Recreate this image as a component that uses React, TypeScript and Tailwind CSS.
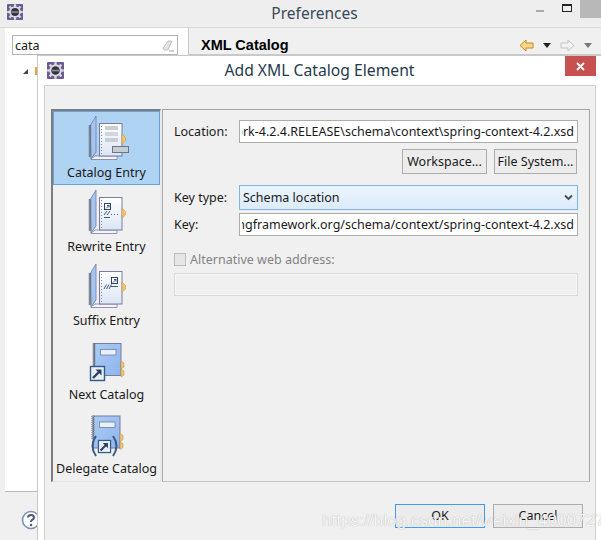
const font = "[font-family:'Noto_Sans',sans-serif]";

function Gear({ className }: { className: string }) {
  const teeth = [0, 45, 90, 135, 180, 225, 270, 315];
  return (
    <svg viewBox="0 0 16 16" className={className}>
      <rect x="0" y="0" width="16" height="16" fill="#6a5a9a" rx="1" />
      {teeth.map((t) => (
        <rect key={t} x="6.9" y="0.2" width="2.2" height="3.6" fill="#dcdcd6" transform={`rotate(${t} 8 8)`} />
      ))}
      <circle cx="8" cy="8" r="5.8" fill="#dcdcd6" />
      <circle cx="8" cy="8" r="4" fill="#34343f" />
      <rect x="4.4" y="7.3" width="7.2" height="1.5" fill="#8f8bb0" />
    </svg>
  );
}

function Spiral({ x, y, count }: { x: number; y: number; count: number }) {
  return (
    <g>
      {Array.from({ length: count }).map((_, i) => (
        <ellipse key={i} cx={x} cy={y + i * 2} rx="1.4" ry="0.6" fill="#dfe5ee" stroke="#4a5268" strokeWidth="0.6" />
      ))}
    </g>
  );
}

function EntryBase({ children }: { children?: React.ReactNode }) {
  return (
    <>
      <path d="M4 12 L10 2 V38 L5 45z" fill="#a4c6ee" stroke="#6f7da6" strokeWidth="0.8" />
      <path d="M5 45 L9 42 H31 V45.5 H5z" fill="#f2f5fb" stroke="#7d7a9f" strokeWidth="0.8" />
      <Spiral x={4} y={12} count={16} />
      <rect x="13.5" y="9.5" width="22.5" height="32.5" fill="url(#page)" stroke="#7d7a9f" />
      <path d="M15.5 12v28" stroke="#5f78b0" strokeWidth="0.8" strokeDasharray="1 2" />
      <path d="M36 20 L39.5 23.5 V27 L36 30z" fill="#f4c46c" stroke="#c59a4a" strokeWidth="0.6" />
      {children}
    </>
  );
}

function Defs() {
  return (
    <defs>
      <linearGradient id="page" x1="0" y1="0" x2="0" y2="1">
        <stop offset="0" stopColor="#ffffff" />
        <stop offset="1" stopColor="#dbe5f4" />
      </linearGradient>
      <linearGradient id="cover" x1="0" y1="0" x2="1" y2="1">
        <stop offset="0" stopColor="#a9cdf2" />
        <stop offset="1" stopColor="#8fb4ef" />
      </linearGradient>
    </defs>
  );
}

function CatalogEntryIcon() {
  return (
    <svg width="46" height="48" viewBox="0 0 46 48" className="block">
      <Defs />
      <EntryBase>
        <rect x="19" y="12" width="13" height="4" fill="#c9cdd4" />
        <rect x="19" y="18" width="13" height="4" fill="#d2d6dc" />
        <rect x="19" y="24" width="13" height="4" fill="#c9cdd4" />
        <rect x="26.5" y="32.5" width="16" height="6" fill="#c4ccd6" stroke="#6f7480" />
      </EntryBase>
    </svg>
  );
}

function RewriteEntryIcon() {
  return (
    <svg width="46" height="48" viewBox="0 0 46 48" className="block">
      <Defs />
      <EntryBase>
        <rect x="18.5" y="15.5" width="6" height="6" fill="#fff" stroke="#2d4470" />
        <path d="M20 20.5 L23 17.5 M21 17.5 H23 V19.5" stroke="#2d4470" fill="none" strokeWidth="0.9" />
        <path d="M18 27 L21 23 M21 27 L24 23 M25 26.5 h1 M28 26.5 h1 M31 26.5 h1" stroke="#2d4470" strokeWidth="0.9" fill="none" />
        <path d="M18 29.5 H24" stroke="#2d4470" strokeWidth="0.9" />
      </EntryBase>
    </svg>
  );
}

function SuffixEntryIcon() {
  return (
    <svg width="46" height="48" viewBox="0 0 46 48" className="block">
      <Defs />
      <EntryBase>
        <rect x="25.5" y="15.5" width="6" height="6" fill="#fff" stroke="#2d4470" />
        <path d="M27 20.5 L30 17.5 M28 17.5 H30 V19.5" stroke="#2d4470" fill="none" strokeWidth="0.9" />
        <path d="M18 27 L20.5 22.5 M20.5 27 L23 22.5 M23 27 L25.5 22.5" stroke="#2d4470" strokeWidth="0.9" fill="none" />
        <path d="M25 24.5 H32" stroke="#2d4470" strokeWidth="0.9" />
      </EntryBase>
    </svg>
  );
}

function Book() {
  return (
    <>
      <rect x="8.5" y="7.5" width="26.5" height="32" fill="url(#cover)" stroke="#7d7a9f" />
      <Spiral x={8} y={8} count={12} />
      <rect x="14.5" y="13.5" width="15.5" height="5.5" fill="#e8f0fa" stroke="#7d7a9f" strokeWidth="0.8" />
      <path d="M35 25 L38 27 V31 L35 33z M35 33 L38 35 V39 L35 41z" fill="#f4c46c" stroke="#c59a4a" strokeWidth="0.6" />
    </>
  );
}

function ShortcutBox({ x, y, s }: { x: number; y: number; s: number }) {
  return (
    <g transform={`translate(${x} ${y}) scale(${s / 15})`}>
      <rect x="0.5" y="0.5" width="14" height="14" fill="#e8eef6" stroke="#345a88" strokeWidth="1.4" />
      <path d="M3 12 L10 5" stroke="#2e3f63" strokeWidth="2.4" />
      <path d="M5.5 3.5 H11.5 V9.5z" fill="#2e3f63" />
    </g>
  );
}

function NextCatalogIcon() {
  return (
    <svg width="46" height="48" viewBox="0 0 46 48" className="block">
      <Defs />
      <Book />
      <ShortcutBox x={4} y={30} s={15} />
    </svg>
  );
}

function DelegateCatalogIcon() {
  return (
    <svg width="46" height="48" viewBox="0 0 46 48" className="block">
      <Defs />
      <g transform="translate(-1 -1.5)">
        <Book />
      </g>
      <ShortcutBox x={12} y={30} s={13} />
      <path d="M10 26 Q3 36 10 46" fill="none" stroke="#3a5a86" strokeWidth="2" />
      <path d="M27 26 Q34 36 27 46" fill="none" stroke="#3a5a86" strokeWidth="2" />
    </svg>
  );
}

const entries = [
  { label: "Catalog Entry", icon: <CatalogEntryIcon />, active: true },
  { label: "Rewrite Entry", icon: <RewriteEntryIcon /> },
  { label: "Suffix Entry", icon: <SuffixEntryIcon /> },
  { label: "Next Catalog", icon: <NextCatalogIcon /> },
  { label: "Delegate Catalog", icon: <DelegateCatalogIcon /> },
];

function PageList() {
  return (
    <div className="w-[110px] shrink-0 border-t-2 border-l-2 border-r border-b border-t-[#7c7c7c] border-l-[#7c7c7c] border-r-[#e3e3e3] border-b-[#e3e3e3] bg-[#f0f0f0]">
      {entries.map((e) => (
        <div
          key={e.label}
          className={
            "flex h-[74px] flex-col items-center pt-[2px] text-[12.5px] leading-[16px] text-[#1a1a1a] " +
            (e.active ? "border border-[#6aa2dc] bg-[#afd3f3]" : "border border-transparent")
          }
        >
          <div className="ml-[4px] h-[47px] w-[46px] shrink-0">{e.icon}</div>
          <span className="mt-[4px] whitespace-nowrap">{e.label}</span>
        </div>
      ))}
    </div>
  );
}

function ClippedField({ text }: { text: string }) {
  return (
    <div className="h-[23px] w-[339px] border border-[#acacac] bg-white px-[2px] text-[12.5px] text-[#1a1a1a]">
      <div className="flex h-full items-center justify-end overflow-hidden whitespace-nowrap pr-px pt-[2px]">
        <span>{text}</span>
      </div>
    </div>
  );
}

function FormPanel() {
  return (
    <div className="flex-1 border border-[#a6a6a6] border-b-[#c4c4c4] bg-[#f0f0f0] pl-[11px] pr-[11px] pt-[10px] text-[12.5px] text-[#1a1a1a]">
      <div className="flex items-center justify-between">
        <span className="pt-[2px]">Location:</span>
        <ClippedField text="spring-framework-4.2.4.RELEASE\schema\context\spring-context-4.2.xsd" />
      </div>
      <div className="mt-[6px] flex justify-end gap-[7px] pr-px">
        <div className="flex h-[25px] w-[85px] items-center justify-center border border-[#adadad] bg-[#ececec] pt-[2px]">Workspace...</div>
        <div className="flex h-[25px] w-[83px] items-center justify-center border border-[#adadad] bg-[#ececec] pt-[2px]">File System...</div>
      </div>
      <div className="mt-[11px] flex items-center justify-between">
        <span className="pt-[2px]">Key type:</span>
        <div className="flex h-[25px] w-[339px] items-center justify-between border border-[#7eb4ea] bg-gradient-to-b from-[#ecf4fc] to-[#dcecfc] pl-[3px] pr-[4px]">
          <span className="pt-[2px]">Schema location</span>
          <svg width="9" height="7" viewBox="0 0 9 7">
            <path d="M1 1.5 L4.5 5 L8 1.5" fill="none" stroke="#4a4a4a" strokeWidth="1.8" />
          </svg>
        </div>
      </div>
      <div className="mt-[3px] flex items-center justify-between">
        <span className="pt-[2px]">Key:</span>
        <ClippedField text="http://www.springframework.org/schema/context/spring-context-4.2.xsd" />
      </div>
      <div className="mt-[14px] flex h-[19px] items-center gap-[4px] text-[#838383]">
        <div className="h-[13px] w-[12px] border border-[#bcbcbc] bg-[#e6e6e6]" />
        <span className="pt-[2px]">Alternative web address:</span>
      </div>
      <div className="mt-[4px] h-[23px] w-[404px] border border-[#d9d9d9] bg-[#f0f0f0] shadow-[inset_0_0_0_1px_#f7f7f7]" />
    </div>
  );
}

function Dialog() {
  return (
    <div className="absolute bottom-0 left-[37px] right-0 top-[55px] flex flex-col border-l border-t border-[#c9c9c9] bg-white">
      <div className="relative flex h-[29px] shrink-0 items-center justify-center bg-white">
        <Gear className="absolute left-[9px] top-[6px] h-[17px] w-[17px]" />
        <span className="text-[15.7px] text-[#263a4e]">Add XML Catalog Element</span>
        <div className="absolute right-[5px] top-0 flex h-[20px] w-[31px] items-center justify-center bg-[#c75050]">
          <svg width="9" height="9" viewBox="0 0 9 9">
            <path d="M1 1 L8 8 M8 1 L1 8" stroke="#fff" strokeWidth="1.8" />
          </svg>
        </div>
      </div>
      <div className="ml-[6px] mr-[5px] flex flex-1 flex-col border-l border-r border-t border-[#d0d0d0] bg-[#f0f0f0]">
        <div className="ml-[6px] mr-[5px] mt-[23px] flex h-[373px] gap-[1px]">
          <PageList />
          <FormPanel />
        </div>
        <div className="mt-[22px] flex justify-end gap-[8px] pr-[12px] text-[12.5px] text-[#1a1a1a]">
          <div className="flex h-[24px] w-[90px] items-center justify-center border border-[#3e9bf0] bg-[#ececec]">OK</div>
          <div className="flex h-[24px] w-[90px] items-center justify-center border border-[#adadad] bg-[#ececec]">Cancel</div>
        </div>
      </div>
    </div>
  );
}

export default function App() {
  return (
    <div className={`relative h-[540px] w-[601px] overflow-hidden bg-[#f0f0f0] ${font}`}>
      <div className="relative flex h-[28px] items-center justify-center border-b border-[#d8d8d8] bg-[#eeeeee] pl-[28px]">
        <Gear className="absolute left-[7px] top-[4px] h-[16px] w-[16px]" />
        <span className="text-[15.5px] text-[#3a4a5a]">Preferences</span>
        <div className="absolute left-[536px] top-[10px] h-[2px] w-[8px] bg-[#a8a8a8]" />
        <div className="absolute left-[562px] top-[4px] h-[8px] w-[10px] border border-t-2 border-[#222]" />
        <div className="absolute left-[580px] top-0 h-[18px] w-[21px] bg-[#b8b8b8]" />
      </div>
      <div className="flex h-[512px]">
        <div className="ml-[5px] flex w-[184px] flex-col border-r border-[#c8c8c8]">
          <div className="h-[463px] bg-white pl-[7px] pt-[7px]">
            <div className="flex h-[20px] w-[166px] items-center justify-between border border-[#b4b4b4] bg-white pl-[2px] pr-[2px] pt-[2px] text-[12.5px] text-[#1a1a1a]">
              <span>cata</span>
              <svg width="14" height="14" viewBox="0 0 14 14">
                <path d="M2 9 L7 2 H11 L7 11 H3z" fill="#e4e4e4" stroke="#c0c0c0" />
                <path d="M8 12 H13" stroke="#a0a0a0" />
              </svg>
            </div>
            <div className="ml-[10px] mt-[12px] flex items-center gap-[6px]">
              <svg width="7" height="7" viewBox="0 0 7 7">
                <path d="M6 1 V6 H1z" fill="#444" />
              </svg>
              <div className="h-[8px] w-[2px] bg-[#e8a33c]" />
            </div>
          </div>
          <div className="flex flex-1 border-t border-[#b8b8b8] pl-[16px] pt-[18px]">
            <svg width="18" height="20" viewBox="0 0 18 20">
              <circle cx="10" cy="10" r="8.5" fill="#fff" stroke="#7c90b8" strokeWidth="1.6" />
              <path d="M7 7.5 Q7 5 10 5 Q13 5 13 7.5 Q13 9 11 10 Q10 10.6 10 12" fill="none" stroke="#4a5a80" strokeWidth="2" />
              <circle cx="10" cy="15" r="1.3" fill="#4a5a80" />
            </svg>
          </div>
        </div>
        <div className="flex h-[27px] flex-1 items-center justify-between border-b border-[#c8c8c8] pl-[12px] pr-[9px] pt-[9px]">
          <span className="text-[14.5px] font-bold text-black [font-family:'Liberation_Sans',sans-serif]">XML Catalog</span>
          <div className="flex items-center gap-[9px]">
            <svg width="15" height="13" viewBox="0 0 15 13">
              <path d="M1 6.5 L7 1 V4 H14 V9 H7 V12z" fill="#f6d88a" stroke="#c8861e" />
            </svg>
            <svg width="8" height="5" viewBox="0 0 8 5"><path d="M0 0 H8 L4 5z" fill="#222" /></svg>
            <svg width="15" height="13" viewBox="0 0 15 13">
              <path d="M14 6.5 L8 1 V4 H1 V9 H8 V12z" fill="#f4f4f4" stroke="#c4c4c4" />
            </svg>
            <svg width="8" height="5" viewBox="0 0 8 5"><path d="M0 0 H8 L4 5z" fill="#777" /></svg>
          </div>
        </div>
      </div>
      <Dialog />
      <span className="pointer-events-none absolute left-[322px] top-[508px] whitespace-nowrap text-[17.2px] text-white/90 [font-family:'Liberation_Sans',sans-serif] [text-shadow:0_0_1px_rgba(0,0,0,0.35)]">
        https://blog.csdn.net/weixin_40007271
      </span>
    </div>
  );
}
